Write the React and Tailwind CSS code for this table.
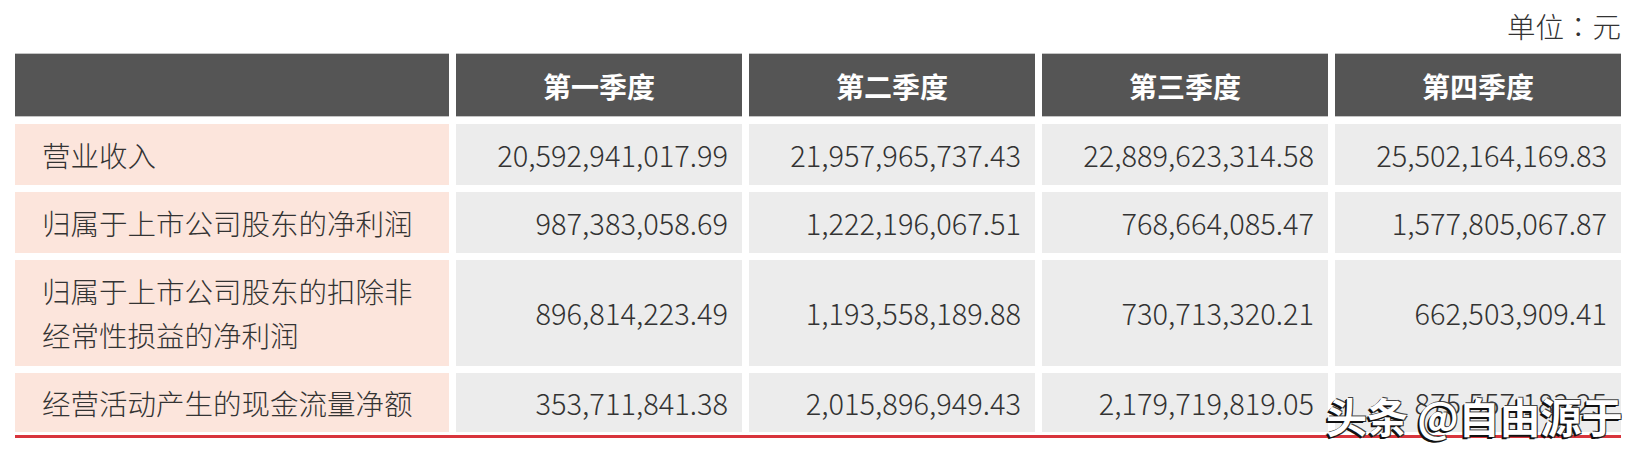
import React from "react";

const font = { fontFamily: '"Noto Sans CJK SC", "Noto Sans", sans-serif' };

const rows = [
  { label: ["营业收入"], values: ["20,592,941,017.99", "21,957,965,737.43", "22,889,623,314.58", "25,502,164,169.83"], h: "h-[61px]" },
  { label: ["归属于上市公司股东的净利润"], values: ["987,383,058.69", "1,222,196,067.51", "768,664,085.47", "1,577,805,067.87"], h: "h-[61px]" },
  { label: ["归属于上市公司股东的扣除非", "经常性损益的净利润"], values: ["896,814,223.49", "1,193,558,189.88", "730,713,320.21", "662,503,909.41"], h: "h-[106px]" },
  { label: ["经营活动产生的现金流量净额"], values: ["353,711,841.38", "2,015,896,949.43", "2,179,719,819.05", "875,557,183.25"], h: "h-[59px]" },
];

const heads = ["第一季度", "第二季度", "第三季度", "第四季度"];

export default function App() {
  return (
    <div className="relative w-[1640px] h-[457px] bg-white overflow-hidden" style={font}>
      <div className="flex justify-end w-[1621px] h-[53px] pt-[9px]">
        <span className="text-[28.5px] leading-[34px] text-[#333] font-light">
          单位<span className="font-['Noto_Sans_CJK_TC',sans-serif]">：</span>元
        </span>
      </div>
      <div className="ml-[15px] w-[1606px] grid grid-cols-[434px_repeat(4,1fr)] gap-x-[7px] gap-y-[7px]">
        <div className="h-[64px] bg-[#555555] border-y border-[#c4c4c4]" />
        {heads.map((t) => (
          <div key={t} className="h-[64px] bg-[#555555] border-y border-[#c4c4c4] flex items-center justify-center pt-[2px] text-white font-bold text-[28px]">
            {t}
          </div>
        ))}
        {rows.map((r, i) => (
          <React.Fragment key={i}>
            <div className={`${r.h} bg-[#fce5dc] flex flex-col justify-center pl-[27px] text-[28.5px] leading-[44px] text-[#333] font-light`}>
              {r.label.map((l) => (
                <span key={l}>{l}</span>
              ))}
            </div>
            {r.values.map((v, j) => (
              <div key={j} className={`${r.h} bg-[#ececec] flex items-center justify-end pr-[14px] text-[29px] text-[#333] font-light`}>
                {v}
              </div>
            ))}
          </React.Fragment>
        ))}
      </div>
      <div className="ml-[15px] w-[1606px] h-[3px] mt-[3px] bg-[#d8343c]" />
      <div className="absolute left-[1326px] top-[389px] text-[41px] leading-[52px] font-bold text-white [text-shadow:-2px_2px_0_#111,-1px_1px_0_#111,1px_-1px_0_#444,1px_1px_0_#333]">
        头条 @自由源于
      </div>
    </div>
  );
}
